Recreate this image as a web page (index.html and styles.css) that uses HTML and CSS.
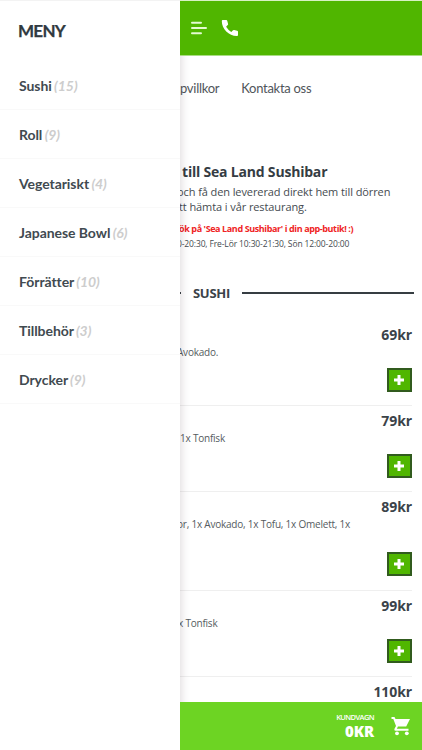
FILE: index.html
```html
<!DOCTYPE html>
<html lang="sv">
<head>
<meta charset="utf-8">
<title>Sea Land Sushibar</title>
<link rel="stylesheet" href="styles.css">
</head>
<body>
<div class="app">
  <aside class="drawer">
    <h1 class="drawer-title">MENY</h1>
    <ul class="categories">
      <li>Sushi <em>(15)</em></li>
      <li>Roll <em>(9)</em></li>
      <li>Vegetariskt <em>(4)</em></li>
      <li>Japanese Bowl <em>(6)</em></li>
      <li>Förrätter <em>(10)</em></li>
      <li>Tillbehör <em>(3)</em></li>
      <li>Drycker <em>(9)</em></li>
    </ul>
  </aside>
  <main class="page">
    <header class="topbar">
      <svg class="menu-icon" width="16" height="14" viewBox="0 0 16 14"><path d="M1 1.8h9M1 7h14M1 12.2h9" fill="none" stroke="#e4fbd2" stroke-width="2" stroke-linecap="round"/></svg>
      <svg class="phone-icon" width="18" height="18" viewBox="0 0 18 18"><path d="M1.7 1h3.500q.9 0 1.100.9l.8 3q.1.700-.4 1.200L5.100 7.800a14 14 0 0 0 5.200 5.100l1.700-1.600q.5-.5 1.200-.4l2.900.8q.9.200.9 1v3.300q0 .9-.9.900C8 17.100.800 10 .8 1.900q0-.9.900-.9z" fill="#fff"/></svg>
    </header>
    <nav class="links"><a class="link-terms">pvillkor</a><a class="link-contact">Kontakta oss</a></nav>
    <section class="intro">
      <h2>till Sea Land Sushibar</h2>
      <p class="lead">och få den levererad direkt hem till dörren</p>
      <p class="lead lead-second">tt hämta i vår restaurang.</p>
      <p class="promo">ök på 'Sea Land Sushibar' i din app-butik! :)</p>
      <p class="hours">0-20:30, Fre-Lör 10:30-21:30, Sön 12:00-20:00</p>
    </section>
    <h3 class="section-title"><span>SUSHI</span></h3>
    <section class="products">
      <article class="product">
        <div class="price">69kr</div>
        <p class="d1">Avokado.</p>
        <button><svg width="10" height="10" viewBox="0 0 10 10"><path d="M5 0v10M0 5h10" stroke="#fff" stroke-width="3"/></svg></button>
      </article>
      <article class="product">
        <div class="price">79kr</div>
        <p class="d2">1x Tonfisk</p>
        <button><svg width="10" height="10" viewBox="0 0 10 10"><path d="M5 0v10M0 5h10" stroke="#fff" stroke-width="3"/></svg></button>
      </article>
      <article class="product tall">
        <div class="price">89kr</div>
        <p class="d3">or, 1x Avokado, 1x Tofu, 1x Omelett, 1x</p>
        <button><svg width="10" height="10" viewBox="0 0 10 10"><path d="M5 0v10M0 5h10" stroke="#fff" stroke-width="3"/></svg></button>
      </article>
      <article class="product">
        <div class="price">99kr</div>
        <p class="d4">x Tonfisk</p>
        <button><svg width="10" height="10" viewBox="0 0 10 10"><path d="M5 0v10M0 5h10" stroke="#fff" stroke-width="3"/></svg></button>
      </article>
      <article class="product last">
        <div class="price">110kr</div>
      </article>
    </section>
    <footer class="cart">
      <div class="cart-total"><small>KUNDVAGN</small><strong>0KR</strong></div>
      <svg width="20" height="20" viewBox="0 0 20 20"><path d="M.5 1h3l1 2H19l-3.800 7.600H7l-1.200 2.200h11.700v1.900H4.500q-1.800-.2-1-2L5 10 2.300 3H.5z" fill="#fff"/><circle cx="6" cy="17.300" r="1.900" fill="#fff"/><circle cx="15.800" cy="17.300" r="1.900" fill="#fff"/></svg>
    </footer>
  </main>
</div>
</body>
</html>
```

FILE: styles.css
```css
* { box-sizing: border-box; margin: 0; padding: 0; }
body { width: 422px; height: 750px; overflow: hidden; background: #fff; color: #3b4349; font-family: "Open Sans", sans-serif; }
.app { display: grid; grid-template-columns: 180px 242px; height: 750px; }
.drawer { position: relative; z-index: 1; background: #fff; border-top: 1px solid #f3f3f3; box-shadow: 2px 0 8px rgba(60, 35, 45, .15); font-family: Lato, sans-serif; }
.drawer-title { height: 60px; padding-left: 18px; font-size: 17px; line-height: 60px; font-weight: 700; letter-spacing: -.7px; color: #303940; -webkit-text-stroke: .25px; }
.categories { list-style: none; }
.categories li { height: 49px; padding-left: 19px; border-bottom: 1px solid #f9f9f9; font-size: 14px; line-height: 50px; font-weight: 700; letter-spacing: -.06px; color: #414a50; white-space: nowrap; }
.categories em { color: #cdcdcd; margin-left: -1px; }
.page { display: flex; flex-direction: column; height: 750px; overflow: hidden; white-space: nowrap; }
.topbar { position: relative; z-index: 2; display: flex; align-items: center; gap: 14px; flex: none; height: 56px; padding-left: 11px; background: #50b600; border-top: 1px solid #d7f1c2; border-bottom: 1px solid #a9dc83; }
.links { display: flex; gap: 22px; height: 65px; flex: none; font: 13px/65px Lato, sans-serif; letter-spacing: -.28px; color: #50555a; }
.intro { height: 130px; flex: none; padding-top: 40px; color: #454b50; }
.intro h2 { margin-left: 2px; font-size: 14px; line-height: 22px; letter-spacing: -.2px; color: #353c43; }
.lead { margin-left: -3px; font-size: 11px; line-height: 15px; padding-top: 1px; letter-spacing: -.09px; }
.lead-second { margin-left: -1px; padding-top: 0; }
.promo { margin-left: -1px; padding-top: 7px; font-size: 9px; line-height: 15px; font-weight: 700; letter-spacing: -.39px; color: #ef2424; }
.hours { margin-left: -3px; font-size: 8.500px; line-height: 16px; letter-spacing: -.13px; }
.section-title { display: flex; align-items: center; gap: 12px; height: 84px; flex: none; padding-right: 8px; font-size: 13px; letter-spacing: -.3px; }
.section-title::before, .section-title::after { content: ""; height: 2px; background: #363d42; }
.section-title::before { width: 1px; }
.section-title::after { flex: 1; }
.products { flex: 1; min-height: 0; overflow: hidden; margin-top: -15px; }
.product { display: flex; flex-direction: column; height: 86px; margin-right: 10px; padding-top: 5px; border-bottom: 1px solid #efefef; }
.product.tall { height: 99px; }
.product.last { border: 0; }
.price { align-self: flex-end; font-size: 14px; line-height: 20px; font-weight: 700; letter-spacing: -.1px; }
.product p { font-size: 10px; line-height: 14px; letter-spacing: -.22px; color: #555b60; }
.product .d1 { margin-left: -3px; }
.product .d4 { margin-left: -2px; }
.product .d3 { margin-left: -3px; }
.product button { align-self: flex-end; display: flex; align-items: center; justify-content: center; width: 25px; height: 24px; margin: auto 0 13px; padding: 0 1px 0 0; background: #50b600; border: 2px solid #315b1e; }
.product.tall button { margin-bottom: 14px; }
.cart { position: relative; z-index: 2; display: flex; align-items: center; justify-content: flex-end; gap: 17px; height: 48px; flex: none; padding-right: 11px; background: #6dd423; color: #fff; }
.cart-total { display: flex; flex-direction: column; align-items: flex-end; }
.cart small { font-size: 7.500px; line-height: 11px; letter-spacing: -.6px; font-weight: 600; }
.cart strong { font-size: 15px; line-height: 17px; font-weight: 800; letter-spacing: -.1px; }
```
